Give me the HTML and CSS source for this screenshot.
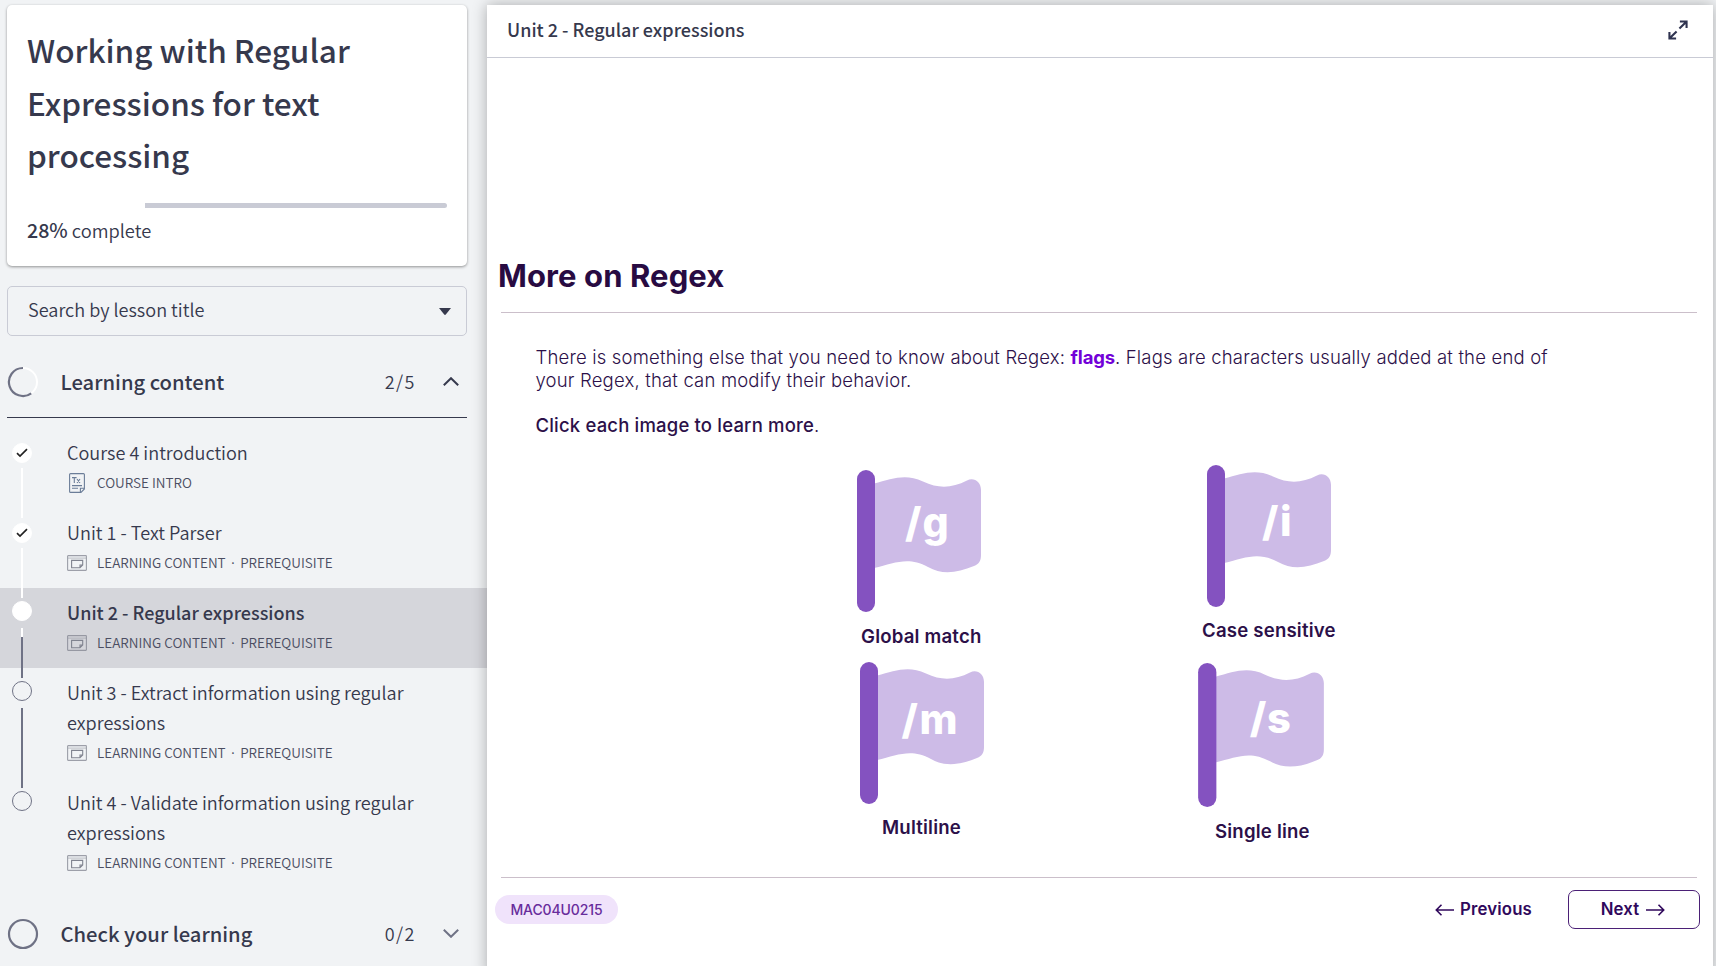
FILE: index.html
```html
<!DOCTYPE html>
<html lang="en">
<head>
<meta charset="utf-8">
<title>Working with Regular Expressions for text processing</title>
<link rel="stylesheet" href="styles.css">
</head>
<body>
<svg width="0" height="0" class="defs">
  <symbol id="lesson" viewBox="0 0 20 16"><g fill="none" stroke="currentColor"><rect x=".6" y=".6" width="18.8" height="14.8" rx=".6" stroke-width="1.1" opacity=".75"/><path d="M1 3.1H19" stroke-width=".8" opacity=".6"/><path d="M4.6 5.4H15.7V10L13 12.8H4.6ZM15.7 10H13V12.8" stroke-width="1.1"/></g></symbol>
  <symbol id="flag" viewBox="0 0 125 142"><path fill="#cdbbe7" d="M17 13.500C35 9 48 3 66 11.500C82 19 95 18 110 10.500C117 7 124 12 124 20V85C124 91 122 94 117 96C100 103 85 105 71 97C51 86 38 93 17 98Z"/><rect width="18" height="142" rx="9" fill="#8452c0"/></symbol>
</svg>
<div class="app">
  <aside class="sidebar">
    <section class="card">
      <h1>Working with Regular Expressions for text processing</h1>
      <div class="progress"><span class="done"></span><span class="rest"></span></div>
      <p class="percent"><b>28%</b> complete</p>
    </section>
    <div class="search"><span>Search by lesson title</span><svg width="12" height="7" viewBox="0 0 12 7"><path d="M0 0H12L6.8 6.5Q6 7.3 5.2 6.5Z" fill="#36394d"/></svg></div>
    <div class="section open">
      <svg class="ring" width="32" height="32" viewBox="0 0 32 32"><circle cx="16" cy="16" r="14" fill="none" stroke="#fff" stroke-width="2"/><path d="M16 2A14 14 0 1 0 24.2 27.3" fill="none" stroke="#6f7285" stroke-width="2.2"/></svg>
      <span class="name">Learning content</span><span class="count">2/5</span>
      <svg class="chev" width="16" height="9" viewBox="0 0 16 9"><path d="M.8 8.2L8 1.2L15.2 8.2" fill="none" stroke="#36394d" stroke-width="2"/></svg>
    </div>
    <ol class="lessons">
      <li class="early"><div class="rail"><span class="dot full"><svg width="12" height="10" viewBox="0 0 12 10"><path d="M1 5.2L4 8L11 1.2" fill="none" stroke="#222" stroke-width="1.7"/></svg></span><span class="line white"></span></div>
        <div class="body"><div class="title">Course 4 introduction</div><div class="meta"><svg class="doc" width="20" height="20" viewBox="0 0 20 20"><g fill="none" stroke="#6b7d98" stroke-width="1.1"><path d="M3.6.6H16.4Q17.4.6 17.4 1.6V16L14 19.4H3.6Q2.6 19.4 2.6 18.4V1.6Q2.6.6 3.6.6ZM17.4 15.3H13.4V19.4M5 12.6H15M5 15.3H11"/><path d="M5 4.6H9.6M7.3 4.6V10M10 6L13 10M13 6L10 10"/></g></svg><span>COURSE INTRO</span></div></div></li>
      <li class="early"><div class="rail"><span class="dot full"><svg width="12" height="10" viewBox="0 0 12 10"><path d="M1 5.2L4 8L11 1.2" fill="none" stroke="#222" stroke-width="1.7"/></svg></span><span class="line white"></span></div>
        <div class="body"><div class="title">Unit 1 - Text Parser</div><div class="meta"><svg width="20" height="16"><use href="#lesson"/></svg><span>LEARNING CONTENT<i>·</i>PREREQUISITE</span></div></div></li>
      <li class="current"><div class="rail"><span class="dot full"></span><span class="line split"></span></div>
        <div class="body"><div class="title">Unit 2 - Regular expressions</div><div class="meta"><svg width="20" height="16"><use href="#lesson"/></svg><span>LEARNING CONTENT<i>·</i>PREREQUISITE</span></div></div></li>
      <li class="tall"><div class="rail"><span class="dot"></span><span class="line"></span></div>
        <div class="body"><div class="title">Unit 3 - Extract information using regular expressions</div><div class="meta"><svg width="20" height="16"><use href="#lesson"/></svg><span>LEARNING CONTENT<i>·</i>PREREQUISITE</span></div></div></li>
      <li class="tall"><div class="rail"><span class="dot"></span></div>
        <div class="body"><div class="title">Unit 4 - Validate information using regular expressions</div><div class="meta"><svg width="20" height="16"><use href="#lesson"/></svg><span>LEARNING CONTENT<i>·</i>PREREQUISITE</span></div></div></li>
    </ol>
    <div class="section last">
      <svg class="ring" width="32" height="32" viewBox="0 0 32 32"><circle cx="16" cy="16" r="14" fill="none" stroke="#6f7285" stroke-width="2.2"/></svg>
      <span class="name">Check your learning</span><span class="count">0/2</span>
      <svg class="chev" width="16" height="9" viewBox="0 0 16 9"><path d="M.8 .8L8 7.8L15.2 .8" fill="none" stroke="#6f7285" stroke-width="2"/></svg>
    </div>
  </aside>
  <main class="panel">
    <header class="top"><span>Unit 2 - Regular expressions</span>
      <svg width="20" height="20" viewBox="0 0 21 21"><g fill="none" stroke="#2f3350" stroke-width="2.2"><path d="M12 9L19 2M12.5 1.5H19.5V8.5M9 12L2 19M1.5 12.5V19.5H8.5"/></g></svg>
    </header>
    <div class="slide">
      <h2>More on Regex</h2>
      <p class="text intro">There is something else that you need to know about Regex: <b>flags</b>. Flags are characters usually added at the end of<br>your Regex, that can modify their behavior.</p>
      <p class="text hint"><strong>Click each image to learn more</strong>.</p>
      <div class="flags">
        <figure class="g"><svg width="125" height="142" viewBox="0 0 125 142"><use href="#flag"/><text x="48 65.500" y="67">/g</text></svg><figcaption>Global match</figcaption></figure>
        <figure class="i"><svg width="125" height="142" viewBox="0 0 125 142"><use href="#flag"/><text x="55 73" y="71">/i</text></svg><figcaption>Case sensitive</figcaption></figure>
        <figure class="m"><svg width="125" height="142" viewBox="0 0 125 142"><use href="#flag"/><text x="41.500 59.500" y="71.500">/m</text></svg><figcaption>Multiline</figcaption></figure>
        <figure class="s"><svg width="127" height="144" viewBox="0 0 125 142"><use href="#flag"/><text x="51 68" y="69.500">/s</text></svg><figcaption>Single line</figcaption></figure>
      </div>
      <footer class="foot">
        <span class="badge">MAC04U0215</span>
        <span class="prev"><svg width="19" height="12" viewBox="0 0 19 12"><path d="M19 6H1.5M6.5 .8L1.3 6L6.5 11.2" fill="none" stroke="#30085c" stroke-width="1.6"/></svg><span>Previous</span></span>
        <span class="next"><span>Next</span><svg width="19" height="12" viewBox="0 0 19 12"><path d="M0 6H17.5M12.5 .8L17.7 6L12.5 11.2" fill="none" stroke="#30085c" stroke-width="1.6"/></svg></span>
      </footer>
    </div>
  </main>
</div>
</body>
</html>
```
FILE: styles.css
```css
* { box-sizing: border-box; margin: 0; padding: 0; }
body { width: 1716px; height: 966px; overflow: hidden; background: #f1f3f5; color: #36394d; font-family: "Noto Sans CJK JP", "Noto Sans CJK SC", sans-serif; }
svg { display: block; flex: none; }
.defs { display: none; }
.app { display: flex; height: 966px; }
.sidebar { width: 487px; flex: none; padding-top: 5px; font-weight: 350; }
.card { width: 460px; height: 261px; margin-left: 7px; padding: 18px 20px 0 20px; background: #fff; border-radius: 5px; box-shadow: 0 1px 3px rgba(0,0,0,.4); }
h1 { font-size: 31.5px; line-height: 52.5px; font-weight: 500; height: 180px; }
.progress { display: flex; height: 5px; border-radius: 3px; overflow: hidden; }
.done { width: 28%; background: #fff; }
.rest { flex: 1; background: #c9cbd5; }
.percent { margin-top: 7px; font-size: 18.3px; line-height: 30px; }
.percent b { font-size: 19.6px; font-weight: 500; }
.search { display: flex; align-items: center; justify-content: space-between; width: 460px; height: 50px; margin: 20px 0 0 7px; padding: 0 15px 0 20px; border: 1px solid #c9cbd5; border-radius: 5px; font-size: 18.1px; line-height: 30px; }
.search span { padding-bottom: 4px; }
.section { display: flex; align-items: center; width: 460px; height: 71px; margin-left: 7px; }
.open { height: 82px; padding-top: 10px; border-bottom: 1px solid #36394d; }
.name { flex: 1; margin-left: 21.500px; font-size: 20.2px; font-weight: 500; }
.count { padding-bottom: 1px; font-size: 18px; letter-spacing: 1.5px; }
.chev { margin: 0 8px 0 27px; }
.lessons { list-style: none; padding-top: 10px; }
.lessons li { display: flex; height: 80px; }
.lessons .tall { height: 110px; }
.lessons .current { background: #d5d6db; }
.rail { width: 44px; margin-right: 23px; padding-top: 13px; display: flex; flex-direction: column; align-items: center; flex: none; }
.early .rail { padding-top: 15px; }
.dot { width: 20px; height: 20px; border: 1px solid #6f7285; border-radius: 50%; flex: none; display: flex; align-items: center; justify-content: center; }
.dot.full { background: #fff; border-color: #fff; }
.line { width: 2px; height: 80px; margin-top: 7px; background: #6f7285; flex: none; z-index: 1; }
.line.white { height: 50px; margin-top: 5px; background: #fff; }
.line.split { height: 50px; background: linear-gradient(#fff 9px, #6f7285 9px); }
.body { width: 370px; padding-top: 9px; }
.title { font-size: 18.1px; line-height: 30px; }
.current .title { font-size: 18px; font-weight: 500; }
.meta { display: flex; align-items: center; gap: 10px; height: 20px; margin-top: 6px; font-size: 13.5px; line-height: 20px; color: #4b4e62; }
.meta span { padding-bottom: 2px; }
.meta svg { color: #80838f; }
.meta i { font-style: normal; margin: 0 3.500px; }
.last { margin-top: 10px; }
.panel { width: 1226px; height: 970px; flex: none; margin-top: 5px; background: #fff; box-shadow: 0 0 14px rgba(0,0,0,.3); z-index: 2; }
.top { display: flex; justify-content: space-between; align-items: center; height: 53px; padding: 0 25px 3px 20px; border-bottom: 1px solid #c9cbd5; font-size: 18px; font-weight: 500; }
.top span { padding-bottom: 2px; }
.slide { padding: 193px 13px 0 8px; font-family: Inter, sans-serif; color: #2c1049; }
h2 { height: 62px; margin: 0 3px 0 6px; border-bottom: 1px solid #cbbfca; font-size: 31px; line-height: 50px; font-weight: 700; color: #280b42; text-indent: -3px; letter-spacing: .1px; }
.text { margin-left: 40.500px; font-size: 18.5px; line-height: 23px; font-weight: 300; letter-spacing: .18px; white-space: nowrap; }
.intro { margin-top: 33px; }
.text b { color: #7200d8; font-weight: 700; letter-spacing: -.15px; }
.hint { margin-top: 22px; }
.text strong { font-weight: 500; }
.flags { display: grid; grid-template-columns: 341px 341px; grid-template-rows: 197px 215px; margin: 28px 0 0 362px; }
.flags text { font: 800 41px Inter, sans-serif; fill: #fff; }
figcaption { margin-top: 12px; font-size: 18.6px; line-height: 24px; font-weight: 600; letter-spacing: .2px; white-space: nowrap; }
.g { padding-top: 5px; } .g figcaption { margin-left: 4px; }
.i { padding-left: 9px; } .i figcaption { margin-left: -5px; margin-top: 11px; }
.m { padding-left: 3px; } .m figcaption { margin-left: 22px; margin-top: 11px; }
.s { padding-top: 1px; } .s figcaption { margin-left: 17px; }
.foot { display: flex; align-items: center; margin-left: 6px; margin-right: 3px; border-top: 1px solid #cbbfca; height: 64px; font-size: 16.8px; font-weight: 600; color: #30085c; letter-spacing: .15px; }
.badge { margin-left: -6px; width: 123px; height: 29px; border-radius: 15px; background: #f0e3fb; color: #682c9c; text-align: center; font-size: 14px; line-height: 29px; font-weight: 500; letter-spacing: -.1px; }
.prev { display: flex; align-items: center; gap: 6px; margin-left: auto; }
.prev span, .next span { padding-bottom: 2px; }
.next { display: flex; align-items: center; justify-content: center; gap: 7px; width: 132px; height: 39px; margin: 0 -3px 0 36px; padding-right: 2px; border: 1.5px solid #4b2076; border-radius: 7px; }
```
